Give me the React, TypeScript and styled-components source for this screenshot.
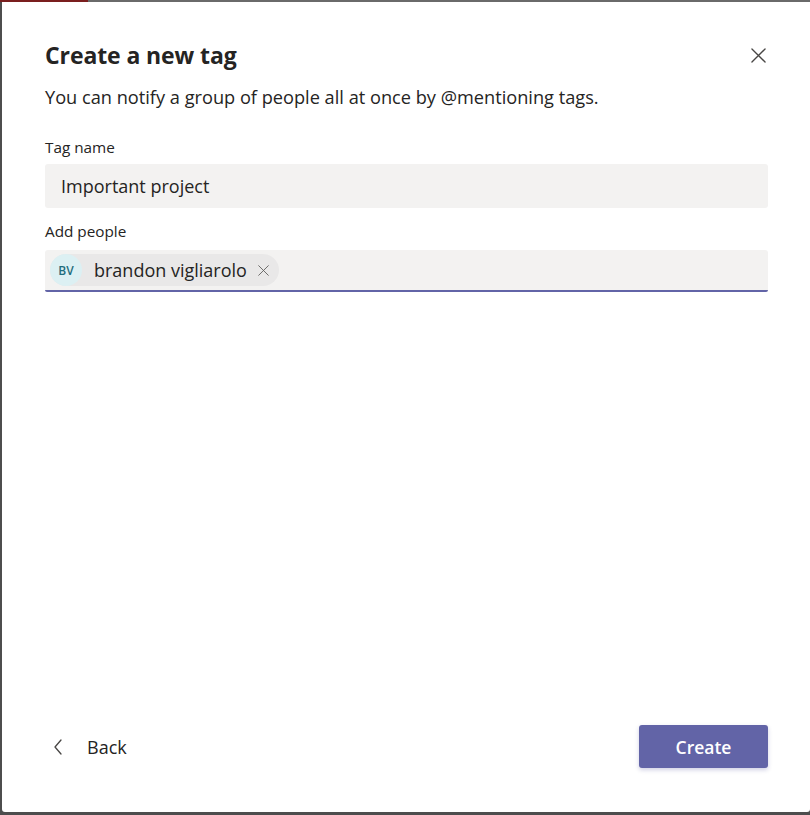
import React from "react";
import styled, { createGlobalStyle } from "styled-components";

const Global = createGlobalStyle`
  html, body { margin: 0; padding: 0; }
  body {
    background: #505050;
    font-family: "Open Sans", "Noto Sans", sans-serif;
    color: #252423;
    width: 810px;
    height: 815px;
    overflow: hidden;
  }
`;

const Page = styled.div`
  width: 810px;
  height: 815px;
  display: flex;
  flex-direction: column;
  background: #4d4d4d;
`;

const TopStrip = styled.div`
  height: 2px;
  display: flex;
  background: #6a6a6a;
`;

const RedBlock = styled.div`
  width: 88px;
  background: #7a1e1e;
`;

const Body = styled.div`
  flex: 1;
  display: flex;
  padding-left: 2px;
  padding-bottom: 3px;
`;

const Dialog = styled.div`
  flex: 1;
  background: #ffffff;
  border-radius: 0 0 3px 3px;
  display: flex;
  flex-direction: column;
  padding: 35px 42px 44px 43px;
`;

const Header = styled.div`
  display: flex;
  align-items: center;
  justify-content: space-between;
`;

const Title = styled.h1`
  margin: 0;
  font-size: 23px;
  font-weight: 700;
  line-height: 36px;
  color: #252423;
  letter-spacing: -0.1px;
`;

const CloseButton = styled.button`
  border: none;
  background: transparent;
  padding: 0;
  width: 20px;
  height: 20px;
  display: flex;
  align-items: center;
  justify-content: center;
  margin-right: 0;
  cursor: pointer;
`;

const Subtitle = styled.p`
  margin: 11px 0 0;
  font-size: 18.2px;
  line-height: 26px;
  color: #252423;
`;

const Label = styled.label<{ $top: number }>`
  display: block;
  margin-top: ${(p) => p.$top}px;
  font-size: 15.3px;
  line-height: 20px;
  color: #252423;
`;

const Field = styled.div<{ $focused?: boolean }>`
  margin-top: ${(p) => (p.$focused ? 9 : 7)}px;
  height: ${(p) => (p.$focused ? 40 : 44)}px;
  background: #f3f2f1;
  border-radius: 3px 3px ${(p) => (p.$focused ? "2px 2px" : "3px 3px")};
  border-bottom: ${(p) => (p.$focused ? "2px solid #6264a7" : "none")};
  display: flex;
  align-items: center;
  padding: 0 ${(p) => (p.$focused ? 5 : 16)}px;
  font-size: 18px;
  color: #252423;
`;

const Chip = styled.div`
  display: flex;
  align-items: center;
  height: 32px;
  background: #e9e8e8;
  border-radius: 16px;
  padding-right: 10px;
`;

const Avatar = styled.div`
  width: 32px;
  height: 32px;
  border-radius: 50%;
  background: #dcf0f3;
  color: #1f6d7d;
  font-size: 12px;
  font-weight: 600;
  display: flex;
  align-items: center;
  justify-content: center;
`;

const ChipName = styled.span`
  margin-left: 12px;
  font-size: 18px;
  color: #252423;
`;

const ChipRemove = styled.span`
  margin-left: 11px;
  display: flex;
  align-items: center;
`;

const Spacer = styled.div`
  flex: 1;
`;

const Footer = styled.div`
  display: flex;
  align-items: center;
  justify-content: space-between;
`;

const BackButton = styled.button`
  border: none;
  background: transparent;
  padding: 0 0 0 8px;
  display: flex;
  align-items: center;
  gap: 24px;
  font-family: inherit;
  font-size: 18px;
  color: #252423;
  cursor: pointer;
`;

const PrimaryButton = styled.button`
  width: 129px;
  height: 43px;
  border: none;
  border-radius: 3px;
  background: #6264a7;
  color: #ffffff;
  font-family: inherit;
  font-size: 17.5px;
  font-weight: 600;
  box-shadow: 0 2px 4px rgba(98, 100, 167, 0.3);
  cursor: pointer;
`;

const XIcon = ({ size, color, sw }: { size: number; color: string; sw: number }) => (
  <svg width={size} height={size} viewBox="0 0 16 16" fill="none">
    <path d="M1 1L15 15M15 1L1 15" stroke={color} strokeWidth={sw} strokeLinecap="round" />
  </svg>
);

export default function App() {
  return (
    <>
      <Global />
      <Page>
        <TopStrip>
          <RedBlock />
        </TopStrip>
        <Body>
          <Dialog>
            <Header>
              <Title>Create a new tag</Title>
              <CloseButton aria-label="Close">
                <XIcon size={15} color="#484644" sw={1.4} />
              </CloseButton>
            </Header>
            <Subtitle>You can notify a group of people all at once by @mentioning tags.</Subtitle>
            <Label $top={27}>Tag name</Label>
            <Field>Important project</Field>
            <Label $top={13}>Add people</Label>
            <Field $focused>
              <Chip>
                <Avatar>BV</Avatar>
                <ChipName>brandon vigliarolo</ChipName>
                <ChipRemove>
                  <XIcon size={11} color="#605e5c" sw={1.3} />
                </ChipRemove>
              </Chip>
            </Field>
            <Spacer />
            <Footer>
              <BackButton>
                <svg width="10" height="16" viewBox="0 0 10 16" fill="none">
                  <path d="M8 1L2 8L8 15" stroke="#484644" strokeWidth="1.3" strokeLinecap="round" strokeLinejoin="round" />
                </svg>
                Back
              </BackButton>
              <PrimaryButton>Create</PrimaryButton>
            </Footer>
          </Dialog>
        </Body>
      </Page>
    </>
  );
}
